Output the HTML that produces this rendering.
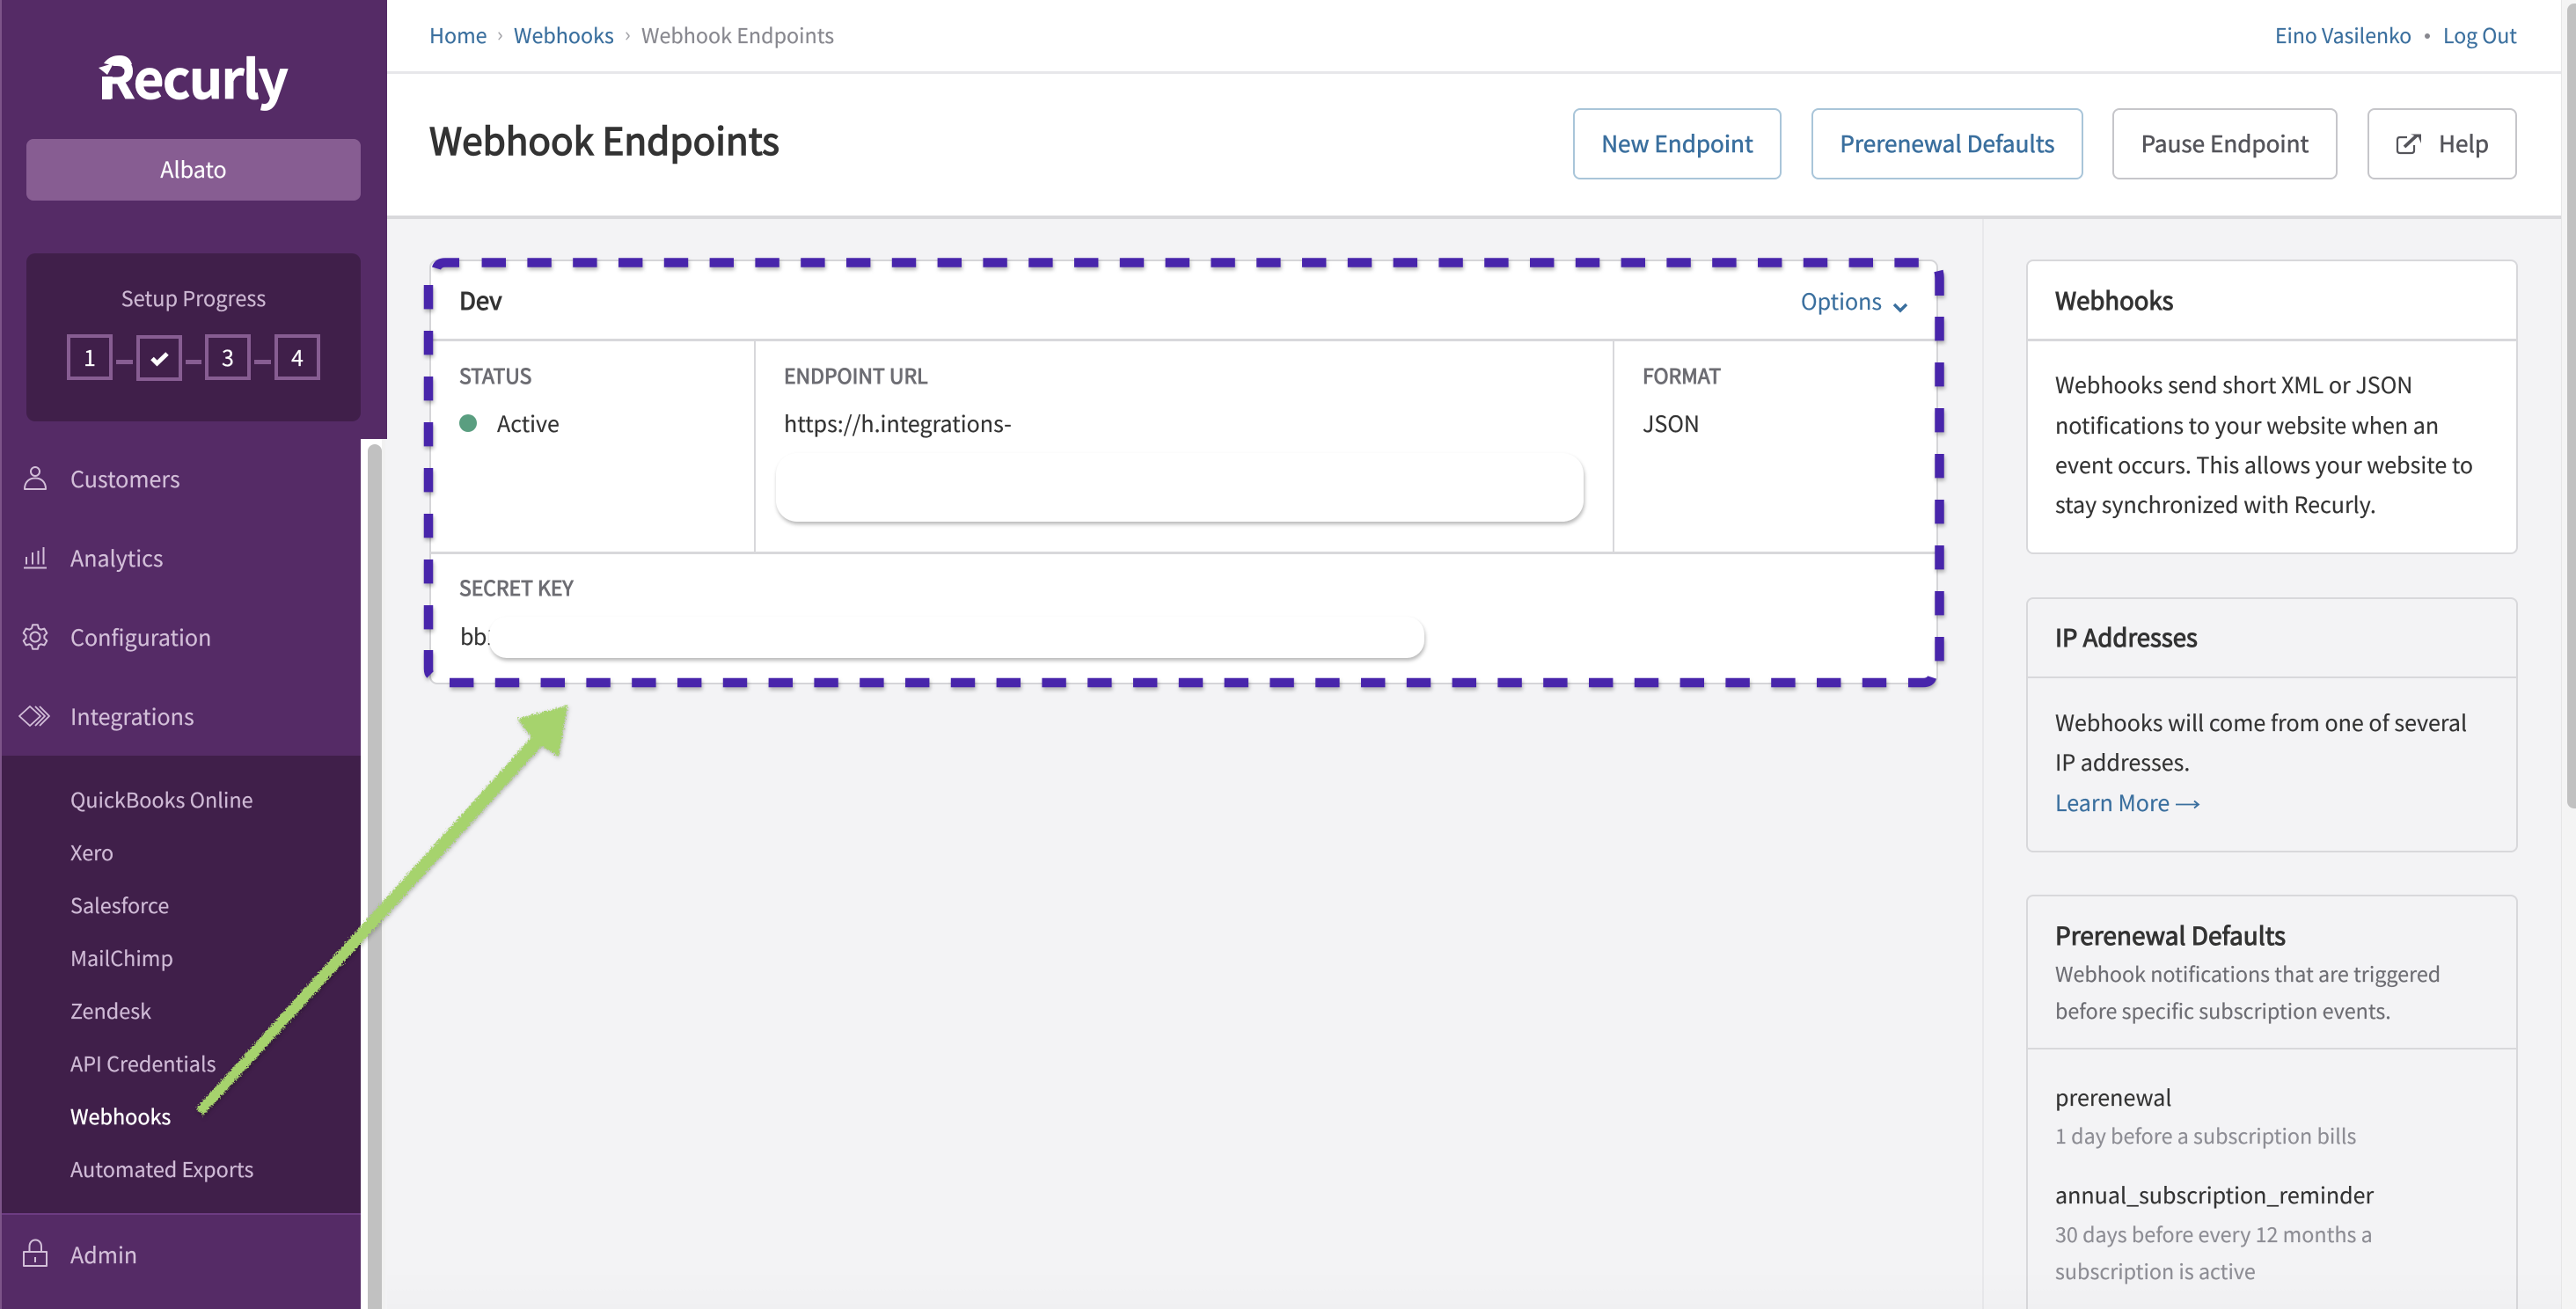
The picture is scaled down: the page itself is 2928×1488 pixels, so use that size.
<!DOCTYPE html>
<html lang="en"><head><meta charset="utf-8"><title>Webhook Endpoints</title>
<style>
*{box-sizing:border-box}
html,body{margin:0;padding:0;width:2928px;height:1488px;overflow:hidden;background:#f3f3f5}
body{position:relative;font-family:"Noto Sans CJK JP","Liberation Sans",sans-serif;font-size:25.05px;color:#333;-webkit-text-stroke:.15px currentColor}
.a{position:absolute}
.t{position:absolute;white-space:nowrap;line-height:40px;height:40px}
.b{-webkit-text-stroke:1px currentColor;font-size:27.5px}
.blue{color:#3a6f9e}
.nav{color:#d3bfd9;left:80px}
.sub{color:#cfbad6;left:80px;font-size:23.4px}
.lab{color:#6d6d73;font-size:23px;-webkit-text-stroke:.9px currentColor}
.sm{font-size:23.3px}
.btn{position:absolute;top:123px;height:81px;border:2.5px solid #c6c6ca;border-radius:8px;background:#fff;line-height:75px;text-align:center;color:#55555b;font-size:26.1px;-webkit-text-stroke:.55px currentColor}
.btn.bl{border-color:#a9c5d9;color:#3a6f9e}
.panel{position:absolute;left:2303px;width:559px;border:2.5px solid #d8d8db;border-radius:8px}
.hr{position:absolute;background:#d8d8db}
.mask{position:absolute;background:#fff;box-shadow:1px 3px 4px rgba(0,0,0,.28)}
</style></head><body>

<!-- main header -->
<div class="a" style="left:440px;top:0;width:2471px;height:248px;background:#fff"></div>
<div class="a" style="left:440px;top:81px;width:2471px;height:3px;background:#e7e7ea"></div>
<div class="a" style="left:440px;top:245px;width:2471px;height:4px;background:#d9d9dc"></div>
<div class="a" style="left:2253px;top:249px;width:2px;height:1239px;background:#e8e8eb"></div>
<div class="a" style="left:2911px;top:0;width:17px;height:1488px;background:#f4f4f4;border-left:1px solid #e6e6e6"></div>
<div class="a" style="left:2918px;top:4px;width:10px;height:915px;background:#c1c1c1;border-radius:8px 0 0 8px"></div>

<!-- sidebar -->
<div class="a" style="left:0;top:0;width:440px;height:499px;background:#552b66"></div>
<div class="a" style="left:0;top:499px;width:410px;height:989px;background:#552b66"></div>
<div class="a" style="left:410px;top:499px;width:28px;height:989px;background:#fff"></div>
<div class="a" style="left:418px;top:505px;width:16px;height:983px;background:#c1c1c1;border-radius:8px 8px 0 0"></div>
<div class="a" style="left:434px;top:499px;width:4px;height:989px;background:#f1f1f1"></div>
<div class="a" style="left:0;top:0;width:2px;height:1488px;background:#7d5489"></div>
<div class="a" style="left:2px;top:859px;width:408px;height:520px;background:#401f4a"></div>
<div class="a" style="left:2px;top:1379px;width:408px;height:2px;background:#6d3c82"></div>

<!-- logo -->
<div class="t" style="left:113px;top:49px;height:76px;line-height:76px;font-size:60px;font-weight:700;color:#fff;letter-spacing:-1.600px;-webkit-text-stroke:.8px #fff">Recurly</div>
<svg class="a" style="left:0;top:0" width="200" height="130">
<path d="M108 60 H128 V73 L131 87 H108 Z" fill="#552b66"/>
<path d="M116 87 H126 V113 H116 Z" fill="#fff"/>
<path d="M118 72 Q124 63 136 63 Q147 63 150 73 L140 78 Q137 71 130 73 L127 74 Z" fill="#fff"/>
<path d="M112 77 L129 72 L122 85 Z" fill="#fff"/>
</svg>

<div class="a" style="left:30px;top:158px;width:380px;height:70px;background:#875d92;border-radius:8px"></div>
<div class="t" style="left:30px;width:380px;top:172px;text-align:center;color:#fff">Albato</div>

<div class="a" style="left:30px;top:288px;width:380px;height:191px;background:#401f4a;border-radius:10px"></div>
<div class="t" style="left:30px;width:380px;top:318px;text-align:center;color:#cdb8d3;font-size:23.5px">Setup Progress</div>
<div class="a" style="left:76px;top:380px;width:52px;height:52px;border:4px solid #875d92"></div>
<div class="a" style="left:155px;top:381px;width:52px;height:52px;border:4px solid #875d92"></div>
<div class="a" style="left:233px;top:380px;width:52px;height:52px;border:4px solid #875d92"></div>
<div class="a" style="left:312px;top:380px;width:52px;height:52px;border:4px solid #875d92"></div>
<div class="a" style="left:132px;top:409px;width:19px;height:5px;background:#875d92"></div>
<div class="a" style="left:211px;top:409px;width:18px;height:5px;background:#875d92"></div>
<div class="a" style="left:289px;top:409px;width:19px;height:5px;background:#875d92"></div>
<div class="t" style="left:76px;width:52px;top:386px;text-align:center;color:#fff">1</div>
<svg class="a" style="left:155px;top:381px" width="52" height="52"><path d="M18 26.500 L23.500 32 L35 21" fill="none" stroke="#fff" stroke-width="5"/></svg>
<div class="t" style="left:233px;width:52px;top:386px;text-align:center;color:#fff">3</div>
<div class="t" style="left:312px;width:52px;top:386px;text-align:center;color:#fff">4</div>

<!-- nav -->
<div class="t nav" style="top:524px">Customers</div>
<div class="t nav" style="top:614px">Analytics</div>
<div class="t nav" style="top:704px">Configuration</div>
<div class="t nav" style="top:794px">Integrations</div>
<div class="t sub" style="top:888px">QuickBooks Online</div>
<div class="t sub" style="top:948px">Xero</div>
<div class="t sub" style="top:1008px">Salesforce</div>
<div class="t sub" style="top:1068px">MailChimp</div>
<div class="t sub" style="top:1128px">Zendesk</div>
<div class="t sub" style="top:1188px">API Credentials</div>
<div class="t sub" style="top:1248px;color:#fff;-webkit-text-stroke:.4px #fff">Webhooks</div>
<div class="t sub" style="top:1308px">Automated Exports</div>
<div class="t nav" style="top:1406px">Admin</div>

<svg class="a" style="left:0;top:500px" width="80" height="980" fill="none" stroke="#d3bfd9" stroke-width="2" stroke-linejoin="round">
<circle cx="40" cy="36" r="5"/>
<path d="M28 56 C28 47 34 43.500 40 43.500 C46 43.500 52 47 52 56 Z"/>
<path d="M27 145.500 H53 M30 141.500 V133 M37 141.500 V128 M43.500 141.500 V126 M49.500 141.500 V122"/>
<g transform="translate(40 224)"><circle r="5.500"/><path d="M-3.930 -9.740 L-2.910 -13.690 L2.910 -13.690 L3.930 -9.740 L6.460 -8.270 L10.400 -9.370 L13.310 -4.330 L10.400 -1.460 L10.400 1.460 L13.310 4.330 L10.400 9.370 L6.460 8.270 L3.930 9.740 L2.910 13.690 L-2.910 13.690 L-3.930 9.740 L-6.460 8.270 L-10.400 9.370 L-13.310 4.330 L-10.400 1.460 L-10.400 -1.460 L-13.310 -4.330 L-10.400 -9.370 L-6.460 -8.270 Z"/></g>
<path d="M34 303 L22 314 L34 325 L46 314 Z M40 303 L51 314 L40 325 M45 303 L56 314 L45 325" stroke-width="1.800"/>
<path d="M27 923 H53 V939 H27 Z M33.500 923 V917 C33.500 907 47 907 47 917 V923 M40 929 V935"/>
</svg>

<!-- top bar -->
<div class="t blue" style="left:488px;top:19px;font-size:23.300px">Home</div>
<div class="t" style="left:565px;top:18px;color:#a5a5aa;font-size:22px">›</div>
<div class="t blue" style="left:584px;top:19px;font-size:23.300px">Webhooks</div>
<div class="t" style="left:710px;top:18px;color:#a5a5aa;font-size:22px">›</div>
<div class="t" style="left:729px;top:19px;color:#88888f;font-size:23.300px">Webhook Endpoints</div>
<div class="t blue" style="left:2586px;top:19px;font-size:23px">Eino Vasilenko</div>
<div class="a" style="left:2756px;top:38px;width:6px;height:6px;border-radius:50%;background:#88888f"></div>
<div class="t blue" style="left:2777px;top:19px;font-size:23px">Log Out</div>

<div class="t" style="left:488px;top:139px;font-size:42.300px;color:#333;-webkit-text-stroke:1.400px #333">Webhook Endpoints</div>

<div class="btn bl" style="left:1788px;width:237px">New Endpoint</div>
<div class="btn bl" style="left:2059px;width:309px">Prerenewal Defaults</div>
<div class="btn" style="left:2401px;width:256px">Pause Endpoint</div>
<div class="btn" style="left:2691px;width:170px;text-align:left;padding-left:79px">Help</div>
<svg class="a" style="left:2720px;top:148px" width="36" height="32" fill="none" stroke="#55555b"><path d="M16 8 H8 Q5 8 5 11 V23 Q5 26 8 26 H21 Q24 26 24 23 V17" stroke-width="2.200"/><path d="M13 19 L27 6" stroke-width="3.800"/><path d="M20 4.500 H32 V15 L29 8 Z" fill="#55555b" stroke="none"/></svg>

<!-- main card -->
<div class="a" style="left:488px;top:295px;width:1715px;height:483px;background:#fff;border:2.5px solid #d5d5d8;border-radius:9px"></div>
<div class="hr" style="left:490px;top:385px;width:1711px;height:3px"></div>
<div class="hr" style="left:490px;top:627px;width:1711px;height:3px"></div>
<div class="hr" style="left:857px;top:388px;width:2px;height:239px"></div>
<div class="hr" style="left:1833px;top:388px;width:2px;height:239px"></div>

<div class="t b" style="left:522px;top:320px">Dev</div>
<div class="t blue" style="left:2047px;top:322px">Options</div>
<svg class="a" style="left:2150px;top:342px" width="20" height="16"><path d="M3 4 L10 11 L17 4" fill="none" stroke="#3a6f9e" stroke-width="3.500"/></svg>

<div class="t lab" style="left:522px;top:406px">STATUS</div>
<div class="a" style="left:522px;top:471px;width:20px;height:20px;border-radius:50%;background:#5a9e80"></div>
<div class="t" style="left:565px;top:461px">Active</div>
<div class="t lab" style="left:891px;top:406px">ENDPOINT URL</div>
<div class="t" style="left:891px;top:461px">https://h.integrations-</div>
<div class="mask" style="left:882px;top:515px;width:918px;height:78px;border-radius:24px"></div>
<div class="t lab" style="left:1867px;top:406px">FORMAT</div>
<div class="t" style="left:1867px;top:461px">JSON</div>
<div class="t lab" style="left:522px;top:647px">SECRET KEY</div>
<div class="t" style="left:523px;top:703px;letter-spacing:-.6px">bb1</div>
<div class="mask" style="left:556px;top:701px;width:1063px;height:47px;border-radius:20px"></div>

<!-- dashed annotation -->
<svg class="a" style="left:0;top:0;filter:drop-shadow(1px 3px 2px rgba(0,0,0,.28))" width="2928" height="1488" fill="none" stroke="#4825ab" stroke-width="10.500">
<path d="M547.600 298.500 H2182" stroke-dasharray="27.400 24.400"/>
<path d="M511 776 H2146" stroke-dasharray="27.400 24.400"/>
<path d="M487 324 V730" stroke-dasharray="27.400 24.600"/>
<path d="M2204.500 360 V752" stroke-dasharray="27.400 24.600"/>
<path d="M522 298.500 H506 Q498 298.500 496 305"/>
<path d="M487 739 V760 Q487 765 489 767"/>
<path d="M2169 776 H2186 Q2194 776 2196 770"/>
<path d="M2204.500 336 V316 Q2204.500 312 2203.500 308"/>
</svg>

<!-- right panels -->
<div class="panel" style="top:295px;height:335px;background:#fff"></div>
<div class="hr" style="left:2305px;top:385px;width:555px;height:3px"></div>
<div class="t b" style="left:2336px;top:320px">Webhooks</div>
<div class="t" style="left:2336px;top:417px">Webhooks send short XML or JSON</div>
<div class="t" style="left:2336px;top:463px">notifications to your website when an</div>
<div class="t" style="left:2336px;top:508px">event occurs. This allows your website to</div>
<div class="t" style="left:2336px;top:553px">stay synchronized with Recurly.</div>

<div class="panel" style="top:679px;height:290px"></div>
<div class="hr" style="left:2305px;top:769px;width:555px;height:2px"></div>
<div class="t b" style="left:2336px;top:703px">IP Addresses</div>
<div class="t" style="left:2336px;top:801px">Webhooks will come from one of several</div>
<div class="t" style="left:2336px;top:846px">IP addresses.</div>
<div class="t blue" style="left:2336px;top:892px">Learn More</div>
<svg class="a" style="left:2472px;top:906px" width="30" height="16"><path d="M1 8.500 H26 M22 4.500 L27 8.500 L22 12.500" fill="none" stroke="#3a6f9e" stroke-width="1.800"/></svg>

<div class="panel" style="top:1017px;height:480px"></div>
<div class="hr" style="left:2305px;top:1191px;width:555px;height:2px"></div>
<div class="t b" style="left:2336px;top:1043px;font-size:28px">Prerenewal Defaults</div>
<div class="t sm" style="left:2336px;top:1086px;color:#6d6d73">Webhook notifications that are triggered</div>
<div class="t sm" style="left:2336px;top:1128px;color:#6d6d73">before specific subscription events.</div>
<div class="t" style="left:2336px;top:1227px">prerenewal</div>
<div class="t sm" style="left:2336px;top:1270px;color:#8d8d94">1 day before a subscription bills</div>
<div class="t" style="left:2336px;top:1338px">annual_subscription_reminder</div>
<div class="t sm" style="left:2336px;top:1382px;color:#8d8d94">30 days before every 12 months a</div>
<div class="t sm" style="left:2336px;top:1424px;color:#8d8d94">subscription is active</div>

<!-- green arrow -->
<svg class="a" style="left:0;top:0;filter:drop-shadow(1px 2px 2px rgba(0,0,0,.25))" width="2928" height="1488">
<defs><filter id="r" x="-5%" y="-5%" width="110%" height="110%"><feTurbulence type="fractalNoise" baseFrequency=".6" numOctaves="2" seed="4"/><feDisplacementMap in="SourceGraphic" scale="8" xChannelSelector="R" yChannelSelector="G"/></filter></defs>
<path filter="url(#r)" fill="#a6d36d" d="M588 817 L645 802 L635 860 L616 848 L231 1268 L223 1260 L604 838 Z"/>
</svg>

<div class="a" style="left:440px;top:1440px;width:2471px;height:48px;background:linear-gradient(rgba(0,0,0,0),rgba(0,0,0,.012))"></div>
</body></html>
